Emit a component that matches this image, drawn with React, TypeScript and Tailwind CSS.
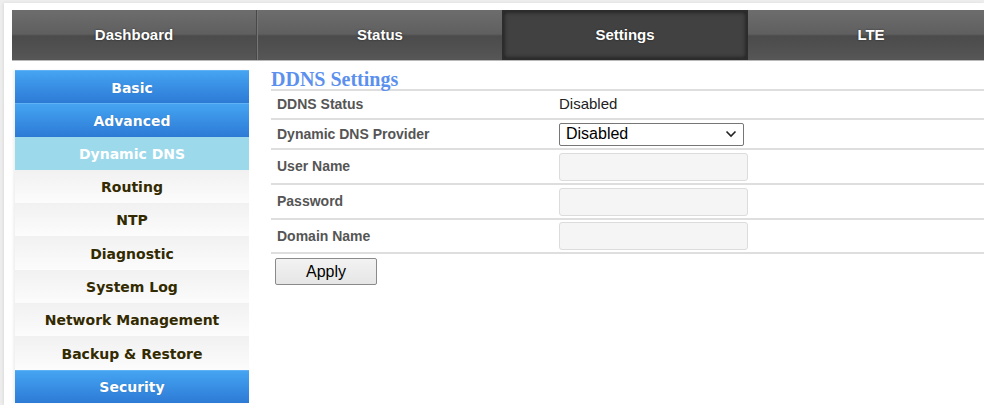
import React from "react";

const tabs = [
  { label: "Dashboard", w: "w-[245px]", active: false },
  { label: "Status", w: "w-[245px]", active: false },
  { label: "Settings", w: "w-[246px]", active: true },
  { label: "LTE", w: "w-[246px]", active: false },
];

type Kind = "blue" | "current" | "plain";
const menu: { label: string; kind: Kind }[] = [
  { label: "Basic", kind: "blue" },
  { label: "Advanced", kind: "blue" },
  { label: "Dynamic DNS", kind: "current" },
  { label: "Routing", kind: "plain" },
  { label: "NTP", kind: "plain" },
  { label: "Diagnostic", kind: "plain" },
  { label: "System Log", kind: "plain" },
  { label: "Network Management", kind: "plain" },
  { label: "Backup & Restore", kind: "plain" },
  { label: "Security", kind: "blue" },
];

const itemClass: Record<Kind, string> = {
  blue: "bg-gradient-to-b from-[#45a4f2] to-[#2d7ad5] text-white [text-shadow:0_0_1px_rgba(0,0,0,0.25)] border-t border-[#5fb2f5]",
  current: "bg-[#9cd9ea] text-white",
  plain: "bg-gradient-to-b from-[#f1f1f1] to-[#fcfcfc] text-[#332a00]",
};

function Row({ label, h, children }: { label: string; h: string; children?: React.ReactNode }) {
  return (
    <div className={`flex items-center border-b-2 border-[#dedede] ${h}`}>
      <div className="w-[288px] pl-[6px] text-[14px] font-bold text-[#555]">{label}</div>
      <div className="flex items-center">{children}</div>
    </div>
  );
}

function Field() {
  return <div className="h-[28px] w-[189px] rounded-[3px] border border-[#dcdcdc] bg-[#f5f5f5]" />;
}

export default function App() {
  return (
    <div className="h-[405px] w-[984px] overflow-hidden bg-[#eeeeee] pl-[4px] pt-[3px] font-['Liberation_Sans',Arial,sans-serif]">
      <div className="h-full w-full bg-white pl-[8px] pt-[7px] shadow-[-1px_0_3px_rgba(0,0,0,0.08)]">
        {/* top navigation */}
        <div className="flex h-[51px] overflow-hidden border-b border-[#b9b9b9]">
          {tabs.map((t, i) => (
            <div
              key={t.label}
              className={`${t.w} flex shrink-0 items-center justify-center text-[15px] font-bold text-white [text-shadow:0_0_2px_rgba(0,0,0,0.6)] ${
                t.active
                  ? "border-2 border-[#2c2c2c] bg-[#414141] shadow-[inset_0_0_4px_rgba(0,0,0,0.6)]"
                  : "bg-[linear-gradient(to_bottom,#6d6d6d_0%,#5f5f5f_48%,#4b4b4b_52%,#565656_100%)]"
              } ${i === 0 ? "border-r border-[#484848]" : ""} ${i === 1 ? "border-l border-[#767676]" : ""}`}
            >
              {t.label}
            </div>
          ))}
        </div>

        <div className="mt-[9px] flex">
          {/* side menu */}
          <div className="ml-[3px] w-[234px] shrink-0 shadow-[-2px_0_2px_rgba(0,0,0,0.06)]">
            {menu.map((m) => (
              <div
                key={m.label}
                className={`flex h-[33.3px] items-center justify-center pt-[2px] font-['DejaVu_Sans',Verdana,sans-serif] text-[14px] font-bold ${itemClass[m.kind]}`}
              >
                {m.label}
              </div>
            ))}
          </div>

          {/* DDNS form */}
          <div className="ml-[22px] flex-1">
            <div className="h-[21px] border-b-2 border-[#dedede] font-['Liberation_Serif','Times_New_Roman',serif] text-[20px] leading-[19px] font-bold text-[#5c90ee]">
              DDNS Settings
            </div>
            <Row label="DDNS Status" h="h-[29px]">
              <span className="text-[15px] text-[#222]">Disabled</span>
            </Row>
            <Row label="Dynamic DNS Provider" h="h-[30px]">
              <div className="flex h-[23px] w-[185px] items-center justify-between rounded-[2px] border border-[#767676] bg-white pl-[6px] pr-[6px] text-[16px] text-black">
                <span>Disabled</span>
                <svg width="12" height="8" viewBox="0 0 12 8" fill="none">
                  <path d="M1.5 1.5 L6 6 L10.5 1.5" stroke="#222" strokeWidth="1.6" />
                </svg>
              </div>
            </Row>
            <Row label="User Name" h="h-[35px]">
              <Field />
            </Row>
            <Row label="Password" h="h-[35px]">
              <Field />
            </Row>
            <Row label="Domain Name" h="h-[34px]">
              <Field />
            </Row>
            <button className="ml-[4px] mt-[4px] flex h-[27px] w-[102px] items-center justify-center rounded-[2px] border border-[#8a8a8a] bg-gradient-to-b from-[#f2f2f2] to-[#e6e6e6] text-[16px] text-black">
              Apply
            </button>
          </div>
        </div>
      </div>
    </div>
  );
}
